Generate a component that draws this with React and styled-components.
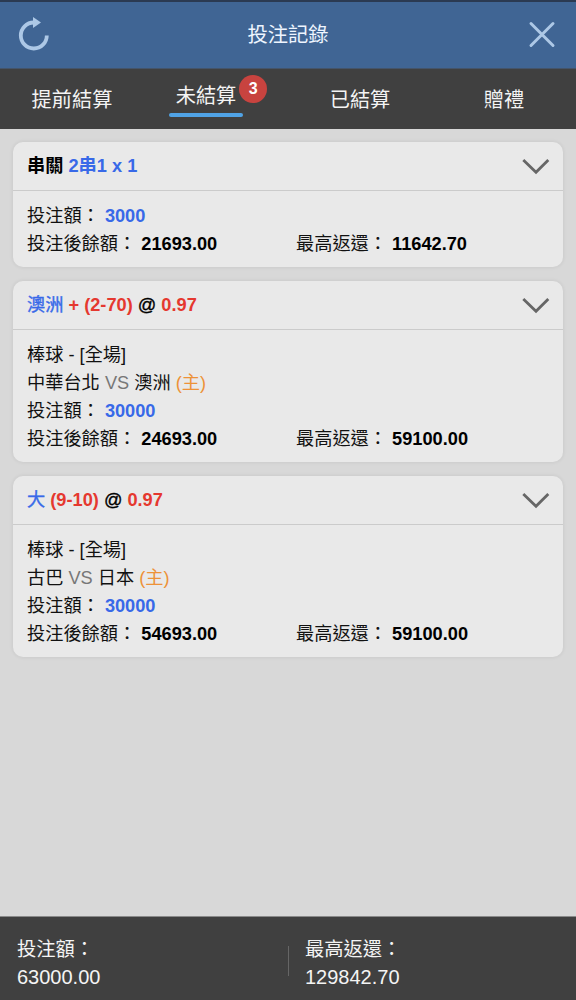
import React from "react";
import styled, { createGlobalStyle } from "styled-components";

const GlobalStyle = createGlobalStyle`
  * { box-sizing: border-box; }
  body {
    margin: 0;
    background: #d8d8d8;
    font-family: "Liberation Sans", "Noto Sans CJK TC", sans-serif;
  }
`;

const Screen = styled.div`
  display: flex;
  flex-direction: column;
  height: 1000px;
  width: 576px;
  overflow: hidden;
  background: #d8d8d8;
`;

const Header = styled.header`
  display: flex;
  align-items: center;
  justify-content: space-between;
  height: 69px;
  padding: 0 18px;
  border-top: 2px solid #2b3a52;
  border-bottom: 1px solid #44546a;
  background: #406594;
  color: #eef5ff;
`;

const Title = styled.h1`
  margin: 0;
  font-size: 20.3px;
  line-height: 30px;
  font-weight: 400;
`;

const IconButton = styled.button`
  display: flex;
  width: 32px;
  height: 36px;
  padding: 0;
  border: 0;
  background: none;
  color: #adc8e6;
`;

const Tabs = styled.nav`
  display: flex;
  flex: none;
  height: 60px;
  background: #404040;
  color: #f4f4f4;
`;

const Tab = styled.button`
  display: flex;
  align-items: center;
  justify-content: center;
  width: 144px;
  padding: ${(p) => (p.$active ? "0 20px 6px 0" : "2px 0 0")};
  border: 0;
  background: none;
  color: inherit;
  font: inherit;
  font-size: 20.2px;
  line-height: 30px;
`;

const TabLabel = styled.span`
  position: relative;
  padding: 0 7px;
  ${(p) =>
    p.$active &&
    `&::after {
      content: "";
      position: absolute;
      left: 0;
      right: 0;
      bottom: -6px;
      height: 4px;
      border-radius: 2px;
      background: #50a3e6;
    }`}
`;

const Badge = styled.span`
  position: absolute;
  top: -6px;
  left: 70.5px;
  width: 28px;
  height: 28px;
  border-radius: 50%;
  background: #c8433f;
  color: #fff;
  font-size: 16px;
  font-weight: 700;
  line-height: 28px;
  text-align: center;
`;

const BetList = styled.main`
  display: flex;
  flex: 1;
  flex-direction: column;
  gap: 14px;
  padding: 13px 13px 0;
`;

const Card = styled.article`
  border-radius: 10px;
  background: #e9e9e9;
  box-shadow: 0 0 4px rgba(0, 0, 0, 0.09);
`;

const CardHeader = styled.div`
  display: flex;
  align-items: center;
  justify-content: space-between;
  height: 49px;
  padding: 1px 13px 0 14px;
  border-bottom: 1px solid #cbcbcb;
`;

const CardTitle = styled.h2`
  margin: 0;
  padding-bottom: 2px;
  font-size: 18.22px;
  line-height: 28px;
  font-weight: 700;
  white-space: pre;
`;

const CardBody = styled.div`
  padding: 11px 14px 9px;
  font-size: 18.22px;
`;

const Row = styled.div`
  display: flex;
  height: 28px;
  line-height: 28px;
  color: #111;
  white-space: pre;
`;

const Cell = styled.div`
  width: ${(p) => (p.$wide ? "269px" : "auto")};
`;

const tones = { blue: "#3869e8", red: "#e5382f", black: "#000", gray: "#777", orange: "#ed9238" };

const Ink = styled.span`
  color: ${(p) => tones[p.$tone]};
  ${(p) => p.$medium && "font-weight: 400; -webkit-text-stroke: 0.35px currentColor;"}
`;

const Amount = styled.b`
  color: ${(p) => tones[p.$tone || "black"]};
`;

const Footer = styled.footer`
  display: flex;
  align-items: center;
  flex: none;
  height: 84px;
  padding: 5px 17px 0;
  border-top: 1px solid #8a8a8a;
  background: #404040;
  color: #f4f4f4;
`;

const Total = styled.div`
  flex: none;
  width: ${(p) => p.$width}px;
`;

const TotalLabel = styled.div`
  padding-top: 6px;
  font-size: 19.3px;
  line-height: 26px;
`;

const TotalValue = styled.div`
  font-size: 20px;
  line-height: 28px;
`;

const Divider = styled.div`
  flex: none;
  width: 1px;
  height: 30px;
  margin-right: 16px;
  background: #666;
`;

const RefreshIcon = () => (
  <svg width="32" height="36" viewBox="0 0 32 36" fill="none">
    <path d="M28.8 18.5A13 13 0 1 1 15.8 5.5" stroke="currentColor" strokeWidth="3.8" />
    <path d="M15 0L23 5.5L15 11Z" fill="currentColor" />
  </svg>
);

const CloseIcon = () => (
  <svg width="32" height="36" viewBox="0 0 32 36" fill="none">
    <path d="M5 6.5L27 28.5M27 6.5L5 28.5" stroke="currentColor" strokeWidth="3" strokeLinecap="round" />
  </svg>
);

const Chevron = () => (
  <svg width="28" height="18" viewBox="0 0 28 18" fill="none">
    <path d="M1.3 2L14 14.3L26.3 2" stroke="#666" strokeWidth="2.8" />
  </svg>
);

const bets = [
  {
    title: [["black", "串關 "], ["blue", "2串1 x 1"]],
    stake: "3000",
    balance: "21693.00",
    payout: "11642.70",
  },
  {
    title: [["blue", "澳洲 ", true], ["red", "+ (2-70) "], ["black", "@ ", true], ["red", "0.97"]],
    event: "棒球 - [全場]",
    away: "中華台北",
    home: "澳洲",
    stake: "30000",
    balance: "24693.00",
    payout: "59100.00",
  },
  {
    title: [["blue", "大 ", true], ["red", "(9-10) "], ["black", "@ ", true], ["red", "0.97"]],
    event: "棒球 - [全場]",
    away: "古巴",
    home: "日本",
    stake: "30000",
    balance: "54693.00",
    payout: "59100.00",
  },
];

const BetCard = ({ bet }) => (
  <Card>
    <CardHeader>
      <CardTitle>
        {bet.title.map(([tone, text, medium], i) => (
          <Ink key={i} $tone={tone} $medium={medium}>{text}</Ink>
        ))}
      </CardTitle>
      <Chevron />
    </CardHeader>
    <CardBody>
      {bet.event && <Row>{bet.event}</Row>}
      {bet.home && (
        <Row>
          <span>{bet.away} <Ink $tone="gray">VS</Ink> {bet.home} <Ink $tone="orange">(主)</Ink></span>
        </Row>
      )}
      <Row><Cell>投注額： <Amount $tone="blue">{bet.stake}</Amount></Cell></Row>
      <Row>
        <Cell $wide>投注後餘額： <Amount>{bet.balance}</Amount></Cell>
        <Cell>最高返還： <Amount>{bet.payout}</Amount></Cell>
      </Row>
    </CardBody>
  </Card>
);

export default function App() {
  return (
    <Screen lang="zh-Hant">
      <GlobalStyle />
      <Header>
        <IconButton aria-label="重新整理"><RefreshIcon /></IconButton>
        <Title>投注記錄</Title>
        <IconButton aria-label="關閉"><CloseIcon /></IconButton>
      </Header>
      <Tabs>
        <Tab><TabLabel>提前結算</TabLabel></Tab>
        <Tab $active>
          <TabLabel $active>未結算<Badge>3</Badge></TabLabel>
        </Tab>
        <Tab><TabLabel>已結算</TabLabel></Tab>
        <Tab><TabLabel>贈禮</TabLabel></Tab>
      </Tabs>
      <BetList>
        {bets.map((bet) => <BetCard key={bet.balance} bet={bet} />)}
      </BetList>
      <Footer>
        <Total $width={271}>
          <TotalLabel>投注額：</TotalLabel>
          <TotalValue>63000.00</TotalValue>
        </Total>
        <Divider />
        <Total $width={240}>
          <TotalLabel>最高返還：</TotalLabel>
          <TotalValue>129842.70</TotalValue>
        </Total>
      </Footer>
    </Screen>
  );
}
